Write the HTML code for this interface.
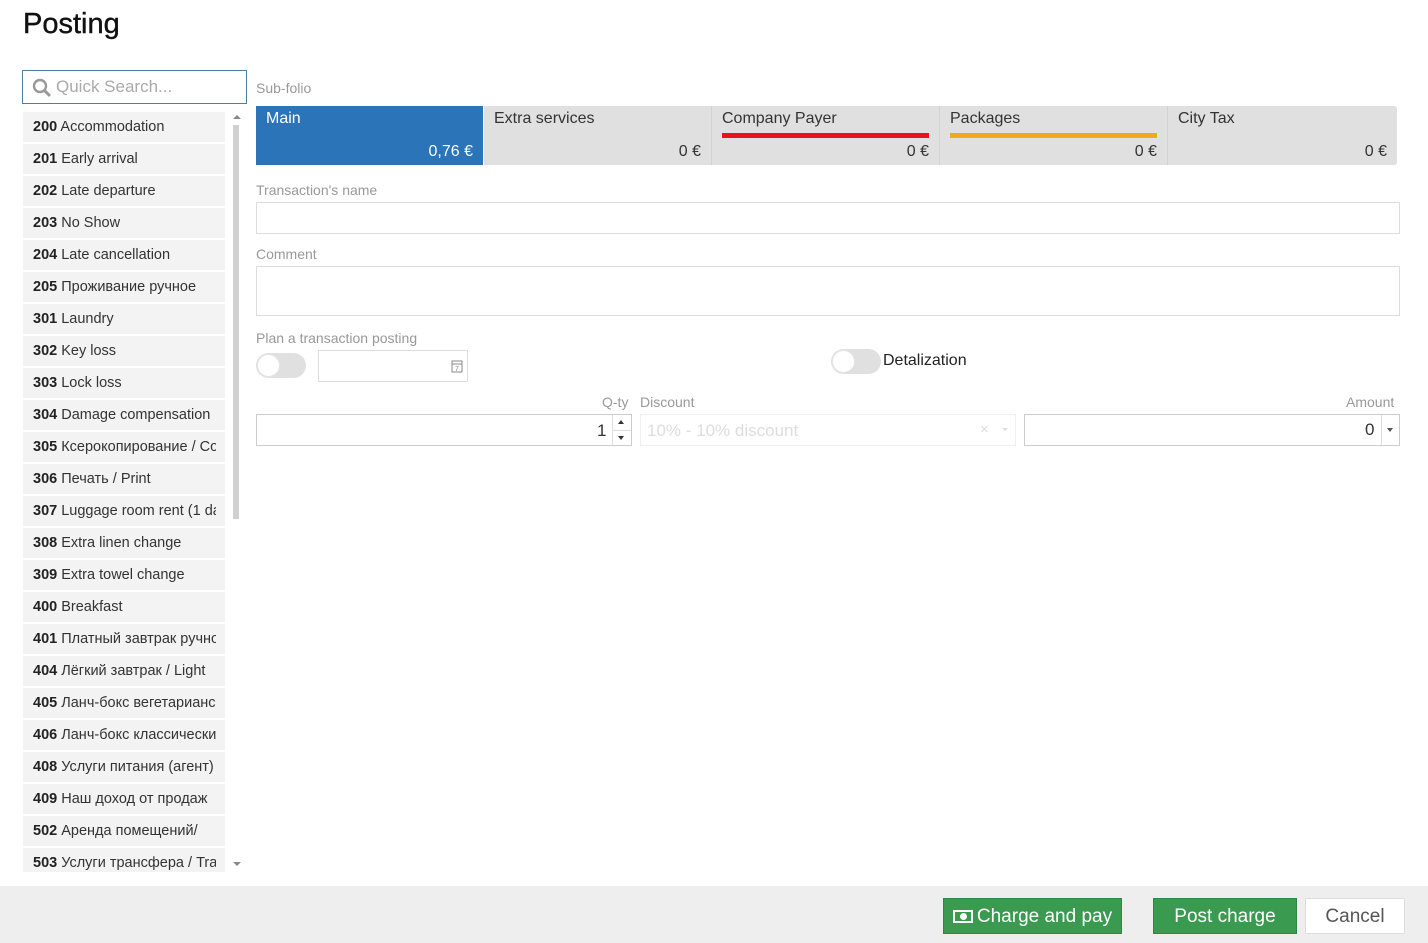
<!DOCTYPE html>
<html><head><meta charset="utf-8"><style>
*{box-sizing:border-box;margin:0;padding:0}
body{width:1428px;height:943px;position:relative;background:#fff;font-family:"Liberation Sans",sans-serif;color:#333;overflow:hidden}
.a{position:absolute}
h1{position:absolute;left:23px;top:8px;font-size:29px;font-weight:normal;color:#111;letter-spacing:0;-webkit-text-stroke:0.4px #111}
.lbl{position:absolute;font-size:14px;color:#999}
.item{position:absolute;left:23px;width:202px;height:30px;background:#f3f3f3;font-size:14.5px;line-height:30px;padding-left:10px;white-space:nowrap;color:#333}
.item span{display:block;width:183px;overflow:hidden}
.item b{color:#222}
.tab{position:absolute;top:106px;height:59px;background:#e0e0e0;border-right:1px solid #d3d3d3;font-size:16px}
.tab .t{position:absolute;left:10px;top:4px;color:#333}
.tab .v{position:absolute;right:10px;bottom:4px;color:#333}
.inp{position:absolute;border:1px solid #ddd;background:#fff}
.btn{position:absolute;top:898px;height:36px;font-size:19px;line-height:36px;text-align:center;color:#fff;background:#3a9a4f;border:1px solid #2f8744}
</style></head><body>
<h1>Posting</h1>

<div class="a" style="left:22px;top:70px;width:225px;height:34px;border:1px solid #4a7fa8;"></div>
<svg class="a" style="left:32px;top:78px" width="20" height="20" viewBox="0 0 20 20"><circle cx="8" cy="8" r="6" fill="none" stroke="#999" stroke-width="2.4"/><line x1="12.5" y1="12.5" x2="18" y2="18" stroke="#999" stroke-width="3"/></svg>
<div class="a" style="left:56px;top:77px;font-size:17px;color:#aaa">Quick Search...</div>

<div class="item" style="top:112px"><span><b>200</b> Accommodation</span></div>
<div class="item" style="top:144px"><span><b>201</b> Early arrival</span></div>
<div class="item" style="top:176px"><span><b>202</b> Late departure</span></div>
<div class="item" style="top:208px"><span><b>203</b> No Show</span></div>
<div class="item" style="top:240px"><span><b>204</b> Late cancellation</span></div>
<div class="item" style="top:272px"><span><b>205</b> Проживание ручное</span></div>
<div class="item" style="top:304px"><span><b>301</b> Laundry</span></div>
<div class="item" style="top:336px"><span><b>302</b> Key loss</span></div>
<div class="item" style="top:368px"><span><b>303</b> Lock loss</span></div>
<div class="item" style="top:400px"><span><b>304</b> Damage compensation</span></div>
<div class="item" style="top:432px"><span><b>305</b> Ксерокопирование / Copy</span></div>
<div class="item" style="top:464px"><span><b>306</b> Печать / Print</span></div>
<div class="item" style="top:496px"><span><b>307</b> Luggage room rent (1 day)</span></div>
<div class="item" style="top:528px"><span><b>308</b> Extra linen change</span></div>
<div class="item" style="top:560px"><span><b>309</b> Extra towel change</span></div>
<div class="item" style="top:592px"><span><b>400</b> Breakfast</span></div>
<div class="item" style="top:624px"><span><b>401</b> Платный завтрак ручной</span></div>
<div class="item" style="top:656px"><span><b>404</b> Лёгкий завтрак / Light</span></div>
<div class="item" style="top:688px"><span><b>405</b> Ланч-бокс вегетарианский</span></div>
<div class="item" style="top:720px"><span><b>406</b> Ланч-бокс классический</span></div>
<div class="item" style="top:752px"><span><b>408</b> Услуги питания (агент)</span></div>
<div class="item" style="top:784px"><span><b>409</b> Наш доход от продаж</span></div>
<div class="item" style="top:816px"><span><b>502</b> Аренда помещений/</span></div>
<div class="item" style="top:848px;height:24px;line-height:30px"><span style="height:24px"><b>503</b> Услуги трансфера / Transfer</span></div>

<div class="a" style="left:233px;top:115px;width:0;height:0;border-left:4px solid transparent;border-right:4px solid transparent;border-bottom:4px solid #888"></div>
<div class="a" style="left:233px;top:125px;width:6px;height:394px;background:#d0d0d0"></div>
<div class="a" style="left:233px;top:862px;width:0;height:0;border-left:4px solid transparent;border-right:4px solid transparent;border-top:4px solid #888"></div>

<div class="lbl" style="left:256px;top:80px">Sub-folio</div>
<div class="tab" style="left:256px;width:227px;background:#2c74b8;border-right:none"><span class="t" style="color:#fff">Main</span><span class="v" style="color:#fff">0,76 €</span></div>
<div class="tab" style="left:484px;width:228px"><span class="t">Extra services</span><span class="v">0 €</span></div>
<div class="tab" style="left:712px;width:228px"><span class="t">Company Payer</span><div class="a" style="left:10px;top:27px;width:207px;height:5px;background:#e8141a"></div><span class="v">0 €</span></div>
<div class="tab" style="left:940px;width:228px"><span class="t">Packages</span><div class="a" style="left:10px;top:27px;width:207px;height:5px;background:#f0a81e"></div><span class="v">0 €</span></div>
<div class="tab" style="left:1168px;width:229px;border-radius:0 3px 3px 0;border-right:none"><span class="t">City Tax</span><span class="v">0 €</span></div>

<div class="lbl" style="left:256px;top:182px">Transaction's name</div>
<div class="inp" style="left:256px;top:202px;width:1144px;height:32px"></div>
<div class="lbl" style="left:256px;top:246px">Comment</div>
<div class="inp" style="left:256px;top:266px;width:1144px;height:50px"></div>
<div class="lbl" style="left:256px;top:330px">Plan a transaction posting</div>
<div class="a" style="left:256px;top:353px;width:50px;height:25px;border-radius:13px;background:#e0e0e0"></div>
<div class="a" style="left:257px;top:354px;width:23px;height:23px;border-radius:50%;background:#fff;border:1px solid #e5e5e5"></div>
<div class="inp" style="left:318px;top:350px;width:150px;height:32px"></div>
<svg class="a" style="left:451px;top:359px" width="12" height="14" viewBox="0 0 12 14"><rect x="1" y="2" width="10" height="11" fill="none" stroke="#888"/><line x1="1" y1="5" x2="11" y2="5" stroke="#888"/><text x="4" y="12" font-size="7" fill="#888" font-family="Liberation Sans">7</text></svg>
<div class="a" style="left:831px;top:349px;width:50px;height:25px;border-radius:13px;background:#e0e0e0"></div>
<div class="a" style="left:832px;top:350px;width:23px;height:23px;border-radius:50%;background:#fff;border:1px solid #e5e5e5"></div>
<div class="a" style="left:883px;top:352px;font-size:16px;color:#222">Detalization</div>

<div class="lbl" style="left:602px;top:394px">Q-ty</div>
<div class="lbl" style="left:640px;top:394px">Discount</div>
<div class="lbl" style="left:1346px;top:394px">Amount</div>
<div class="inp" style="left:256px;top:414px;width:376px;height:32px;border-color:#ccc"></div>
<div class="a" style="left:597px;top:421px;font-size:17px;color:#333">1</div>
<div class="a" style="left:612px;top:415px;width:1px;height:30px;background:#ddd"></div>
<div class="a" style="left:613px;top:430px;width:18px;height:1px;background:#ddd"></div>
<div class="a" style="left:618px;top:420px;border-left:3px solid transparent;border-right:3px solid transparent;border-bottom:4px solid #333"></div>
<div class="a" style="left:618px;top:436px;border-left:3px solid transparent;border-right:3px solid transparent;border-top:4px solid #333"></div>
<div class="inp" style="left:640px;top:414px;width:376px;height:32px;border-color:#eee"></div>
<div class="a" style="left:647px;top:421px;font-size:17px;color:#ddd">10% - 10% discount</div>
<div class="a" style="left:980px;top:421px;font-size:15px;color:#ddd">×</div>
<div class="a" style="left:1002px;top:428px;border-left:3px solid transparent;border-right:3px solid transparent;border-top:3px solid #ddd"></div>
<div class="inp" style="left:1024px;top:414px;width:376px;height:32px;border-color:#ccc"></div>
<div class="a" style="left:1365px;top:420px;font-size:17px;color:#333">0</div>
<div class="a" style="left:1381px;top:415px;width:1px;height:30px;background:#ddd"></div>
<div class="a" style="left:1387px;top:428px;border-left:3px solid transparent;border-right:3px solid transparent;border-top:4px solid #555"></div>

<div class="a" style="left:0;top:886px;width:1428px;height:57px;background:#eee"></div>
<div class="btn" style="left:943px;width:179px"><span style="display:inline-block;width:20px;height:13px;border:2px solid #fff;background:#3a9a4f;vertical-align:-1px;position:relative;margin-right:4px"><span style="position:absolute;left:5px;top:1px;width:7px;height:7px;border-radius:50%;background:#fff"></span></span>Charge and pay</div>
<div class="btn" style="left:1153px;width:144px">Post charge</div>
<div class="btn" style="left:1305px;width:100px;background:#fff;color:#555;border-color:#ddd">Cancel</div>
</body></html>
